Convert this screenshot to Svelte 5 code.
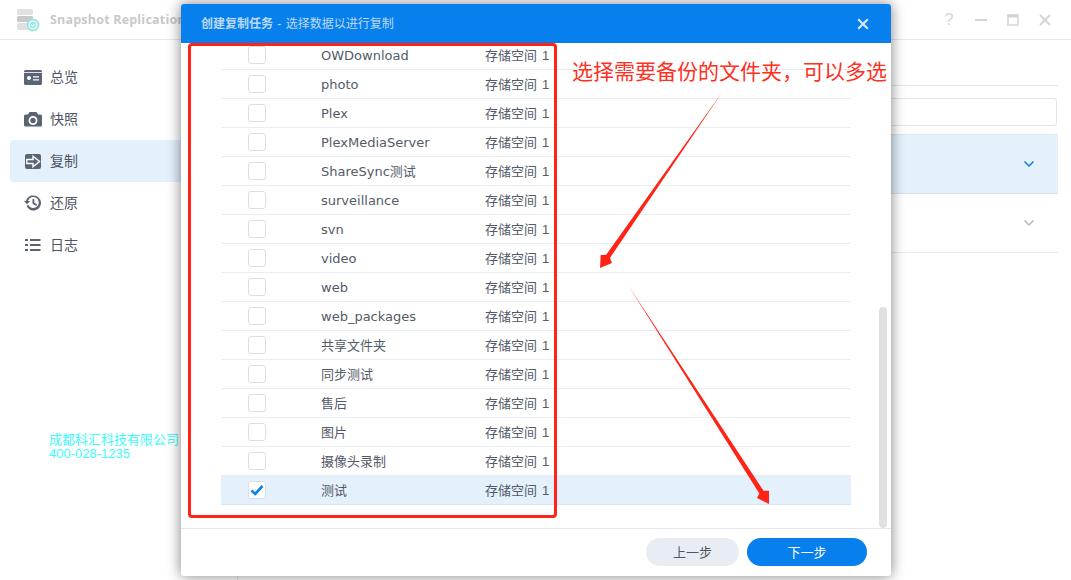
<script>
	const nav = [
		{ id: 'overview', label: '总览' },
		{ id: 'snapshot', label: '快照' },
		{ id: 'replication', label: '复制', active: true },
		{ id: 'restore', label: '还原' },
		{ id: 'log', label: '日志' }
	];

	const folders = [
		'OWDownload', 'photo', 'Plex', 'PlexMediaServer', 'ShareSync测试', 'surveillance',
		'svn', 'video', 'web', 'web_packages', '共享文件夹', '同步测试', '售后', '图片', '摄像头录制', '测试'
	];
	const selected = '测试';

	// names with chinese sit a pixel higher than the latin ones
	const hasCjk = (name) => /[^\x00-\x7f]/.test(name);
</script>

<div class="app">
	<header class="titlebar">
		<svg class="logo" width="24" height="26" viewBox="0 0 24 26">
			<rect x="1" y="2" width="16" height="6" rx="1.500" fill="#e2e2e2" />
			<rect x="1" y="9" width="16" height="6" rx="1.500" fill="#c9c9c9" />
			<rect x="1" y="16" width="16" height="7" rx="1.500" fill="#e0e0e0" />
			<circle cx="17" cy="18" r="6.500" fill="#9fe5e2" />
			<circle cx="17" cy="18" r="3.800" fill="none" stroke="#e8fbfa" stroke-width="1.300" />
			<path d="M15.300 17.500l1.700 1.700 1.700-1.700" fill="none" stroke="#e8fbfa" stroke-width="1.200" />
		</svg>
		<span class="appname">Snapshot Replication</span>
		<div class="controls">
			<span class="help">?</span>
			<svg width="14" height="14" viewBox="0 0 14 14"><rect x="1" y="6" width="12" height="2" fill="#d5d5d5" /></svg>
			<svg width="14" height="14" viewBox="0 0 14 14"><rect x="2" y="2" width="10" height="10" fill="none" stroke="#d5d5d5" stroke-width="1.500" /><rect x="1.500" y="1.500" width="11" height="3" fill="#d5d5d5" /></svg>
			<svg width="14" height="14" viewBox="0 0 14 14"><path d="M2 2l10 10M12 2L2 12" stroke="#d5d5d5" stroke-width="2" /></svg>
		</div>
	</header>

	<div class="body">
		<nav class="sidebar">
			{#each nav as item}
				<div class="navitem" class:active={item.active}>
					<svg width="18" height="18" viewBox="0 0 18 18" fill="#5b6472">
						{#if item.id === 'overview'}
							<path fill-rule="evenodd" d="M1.500 2h15a1.500 1.500 0 0 1 1.500 1.500v12a1.500 1.500 0 0 1-1.500 1.500h-15A1.500 1.500 0 0 1 0 15.500v-12A1.500 1.500 0 0 1 1.500 2zM5 8a2 2 0 1 0 0 4 2 2 0 0 0 0-4zm4 .2v1.400h6V8.200zm0 3v1.400h6v-1.400z" />
							<rect x="0" y="4.200" width="18" height="0.800" fill="#fff" />
						{:else if item.id === 'snapshot'}
							<path fill-rule="evenodd" d="M5.500 2.500h7L14 5h2.500A1.500 1.500 0 0 1 18 6.500v9a1.500 1.500 0 0 1-1.500 1.500h-15A1.500 1.500 0 0 1 0 15.500v-9A1.500 1.500 0 0 1 1.500 5H4zM9 6.500a4.500 4.500 0 1 0 0 9 4.500 4.500 0 0 0 0-9zm0 1.800a2.700 2.700 0 1 1 0 5.400 2.700 2.700 0 0 1 0-5.400z" transform="translate(0 -.5)" />
						{:else if item.id === 'replication'}
							<rect x="1" y="2" width="16" height="15" rx="2" />
							<path d="M2.800 7.500h6.200V4.300l6.500 5.200-6.500 5.200v-3.200H2.800z" stroke="#fff" stroke-width="1.400" />
						{:else if item.id === 'restore'}
							<path d="M9.500 1.500a7.500 7.500 0 1 1-7 10.200l1.900-.7A5.500 5.500 0 1 0 4 7h2.300L3 10.300 0 7h2a7.500 7.500 0 0 1 7.500-5.500z" />
							<path d="M8.500 5h1.800v3.800l2.900 1.700-.9 1.500-3.800-2.300z" />
						{:else}
							<path d="M1 3h3v2H1zM6 3h10.500v2H6zM1 8h3v2H1zM6 8h10.500v2H6zM1 13h3v2H1zM6 13h10.500v2H6z" />
						{/if}
					</svg>
					<span class="navlabel">{item.label}</span>
				</div>
			{/each}
		</nav>

		<main class="content">
			<div class="tabs"></div>
			<div class="filter"><div class="search"></div></div>
			<div class="task current">
				<svg width="12" height="8" viewBox="0 0 12 8"><path d="M1.500 1.500L6 6l4.500-4.500" fill="none" stroke="#0a80ea" stroke-width="1.500" /></svg>
			</div>
			<div class="task">
				<svg width="12" height="8" viewBox="0 0 12 8"><path d="M1.500 1.500L6 6l4.500-4.500" fill="none" stroke="#b5b9bf" stroke-width="1.500" /></svg>
			</div>
		</main>
	</div>

	<div class="watermark">成都科汇科技有限公司<br />400-028-1235</div>

	<section class="dialog">
		<div class="dialog-head">
			<span class="dialog-title"><b>创建复制任务</b> - 选择数据以进行复制</span>
			<svg width="12" height="12" viewBox="0 0 12 12"><path d="M1.200 1.200l9.600 9.600M10.800 1.200l-9.600 9.600" stroke="#d3e7fb" stroke-width="2.200" /></svg>
		</div>
		<div class="dialog-body">
			<div class="list">
				{#each folders as name}
					<div class="row" class:selected={name === selected}>
						<span class="check">
							{#if name === selected}
								<svg width="16" height="16" viewBox="0 0 16 16"><path d="M2.500 8.500l3.700 3.500 7.300-8" fill="none" stroke="#0a80ea" stroke-width="2.600" /></svg>
							{/if}
						</span>
						<span class="name" class:cjk={hasCjk(name)}>{name}</span>
						<span class="volume">存储空间 1</span>
					</div>
				{/each}
			</div>
			<div class="scrollbar"></div>
		</div>
		<div class="dialog-foot">
			<button class="btn">上一步</button>
			<button class="btn primary">下一步</button>
		</div>
	</section>

	<!-- screenshot markup drawn on top -->
	<div class="mark-box"></div>
	<div class="mark-text">选择需要备份的文件夹，可以多选</div>
	<svg class="mark-arrows" width="1071" height="580" viewBox="0 0 1071 580">
		<polygon points="723,91 610,257.900 612,263 600,268 600.700,255 606,255.100" fill="#ff2415" />
		<polygon points="628,285 763.500,490.800 769,490.700 769,504 757,498 759.300,493.600" fill="#ff2415" />
	</svg>
</div>

<style>
	:global(body) {
		background: #fff;
	}

	.app {
		position: relative;
		width: 1071px;
		height: 580px;
		overflow: hidden;
		background: #fff;
		font-family: "Liberation Sans", "Noto Sans CJK SC", sans-serif;
		font-size: 13px;
		color: #535b68;
	}

	.titlebar {
		display: flex;
		align-items: center;
		height: 39px;
		padding-left: 16px;
		border-bottom: 1px solid #e6e8eb;
	}

	.logo {
		margin-right: 10px;
	}

	.appname {
		font-family: "Open Sans", sans-serif;
		font-size: 12.500px;
		font-weight: 700;
		letter-spacing: 0.2px;
		color: #c9c9c9;
	}

	.controls {
		display: flex;
		align-items: center;
		gap: 18px;
		margin-left: auto;
		padding-right: 19px;
	}

	.help {
		width: 14px;
		text-align: center;
		font-size: 16px;
		color: #d5d5d5;
	}

	.body {
		display: flex;
		height: 540px;
	}

	.sidebar {
		box-sizing: border-box;
		width: 238px;
		padding: 16px 0 0 10px;
		border-right: 1px solid #e6e8eb;
	}

	.navitem {
		display: flex;
		align-items: center;
		gap: 8px;
		height: 42px;
		padding-left: 14px;
		border-radius: 4px 0 0 4px;
		font-size: 14px;
		color: #4d5563;
	}

	.navlabel {
		padding-bottom: 2px;
	}

	.navitem.active {
		background: #e4f0fc;
	}

	.content {
		width: 820px;
	}

	.tabs {
		height: 45px;
		border-bottom: 1px solid #dfe5ec;
	}

	.filter {
		padding: 12px 1px 8px 0;
	}

	.search {
		box-sizing: border-box;
		height: 28px;
		border: 1px solid #dfe5ec;
		border-radius: 3px;
	}

	.task {
		display: flex;
		align-items: center;
		justify-content: flex-end;
		box-sizing: border-box;
		height: 59px;
		padding-right: 23px;
		border-bottom: 1px solid #e6e9ee;
	}

	.task.current {
		height: 60px;
		background: #e4f0fc;
		border-top: 1px solid #dce6f0;
		border-bottom-color: #d5e3f1;
	}

	.watermark {
		position: absolute;
		left: 49px;
		top: 433px;
		font-size: 13px;
		line-height: 14px;
		color: #3ffcfc;
		white-space: nowrap;
	}

	.dialog {
		position: absolute;
		left: 181px;
		top: 4px;
		display: flex;
		flex-direction: column;
		width: 710px;
		height: 572px;
		border-radius: 3px;
		background: #fff;
		box-shadow: 0 0 14px rgba(0, 0, 0, 0.5);
	}

	.dialog-head {
		display: flex;
		align-items: center;
		justify-content: space-between;
		flex: none;
		height: 39px;
		padding: 0 22px 0 20px;
		border-radius: 3px 3px 0 0;
		background: #0780ed;
	}

	.dialog-title {
		padding-bottom: 2px;
		font-size: 12px;
		word-spacing: 1px;
		color: #bcdaf8;
	}

	.dialog-title b {
		font-weight: 700;
	}

	.dialog-body {
		position: relative;
		flex: none;
		height: 485px;
		overflow: hidden;
		border-bottom: 1px solid #e3e8ee;
	}

	.list {
		width: 630px;
		margin: -2px 0 0 40px;
	}

	.row {
		display: flex;
		align-items: center;
		box-sizing: border-box;
		height: 29px;
		border-bottom: 1px solid #e8edf3;
	}

	.row.selected {
		background: #e4f0fc;
		border-bottom-color: #d9e6f3;
	}

	.check {
		display: flex;
		align-items: center;
		justify-content: center;
		box-sizing: border-box;
		width: 18px;
		height: 18px;
		margin: 0 55px 0 27px;
		border: 1px solid #d8dfe8;
		border-radius: 3px;
		background: #fff;
	}

	.name {
		flex: none;
		width: 164px;
		font-family: "DejaVu Sans", "Noto Sans CJK SC", sans-serif;
		font-size: 13px;
	}

	.name.cjk {
		padding-bottom: 2px;
	}

	.volume {
		padding-bottom: 2px;
		font-size: 13px;
		word-spacing: 1.500px;
		white-space: nowrap;
	}

	.scrollbar {
		position: absolute;
		right: 4px;
		bottom: 0;
		width: 8px;
		height: 221px;
		border-radius: 4px;
		background: #e0e0e0;
	}

	.dialog-foot {
		display: flex;
		justify-content: flex-end;
		gap: 8px;
		padding: 9px 24px 0 0;
	}

	.btn {
		width: 93px;
		height: 28px;
		padding: 0 0 2px;
		border: 0;
		border-radius: 14px;
		background: #e8edf3;
		font: inherit;
		font-size: 13px;
		color: #4d5563;
	}

	.btn.primary {
		width: 120px;
		background: #0780ed;
		color: #fff;
	}

	.mark-box {
		position: absolute;
		left: 188px;
		top: 43px;
		box-sizing: border-box;
		width: 369px;
		height: 475px;
		border: 3px solid #ff2415;
		border-radius: 4px;
	}

	.mark-text {
		position: absolute;
		left: 572px;
		top: 55px;
		font-family: "Noto Sans CJK SC", sans-serif;
		font-size: 21px;
		line-height: 30px;
		color: #ff2f22;
		white-space: nowrap;
	}

	.mark-arrows {
		position: absolute;
		left: 0;
		top: 0;
	}
</style>
